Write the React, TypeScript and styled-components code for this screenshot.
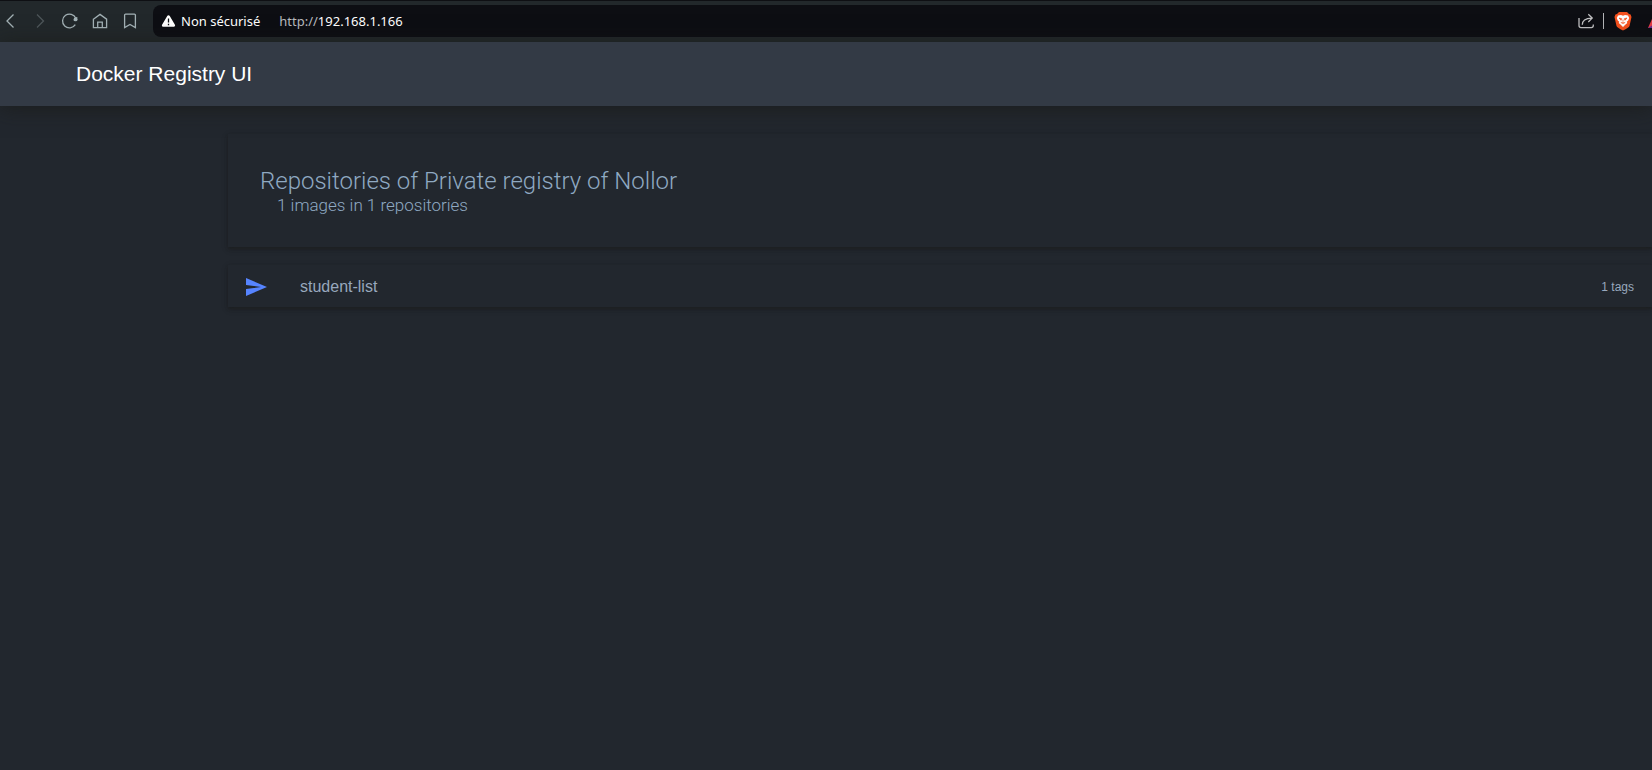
import React from "react";
import styled, { createGlobalStyle } from "styled-components";

const GlobalStyle = createGlobalStyle`
  * { box-sizing: border-box; }
  body {
    margin: 0;
    background: #22272e;
    font-family: "Liberation Sans", Arial, sans-serif;
    overflow-x: hidden;
  }
`;

const BrowserBar = styled.div`
  display: flex;
  align-items: center;
  height: 42px;
  padding-bottom: 1px;
  border-top: 1px solid #0e0f13;
  background: #22282b;
`;

const Tools = styled.nav`
  display: flex;
  flex: none;
  gap: 10px;
  width: 153px;
`;

const IconButton = styled.button<{ $dim?: boolean }>`
  display: flex;
  align-items: center;
  justify-content: center;
  flex: none;
  width: 20px;
  height: 20px;
  padding: 0;
  border: 0;
  background: none;
  color: ${(p) => (p.$dim ? "#4e5659" : "#a3b1b5")};
  cursor: pointer;
`;

const AddressBar = styled.div`
  display: flex;
  align-items: center;
  flex: 1;
  min-width: 0;
  height: 32px;
  padding-left: 8px;
  border-radius: 8px 0 0 8px;
  background: #0d0e13;
  color: #fff;
  font: 13px/18px "Noto Sans", sans-serif;
  overflow: hidden;
`;

const Security = styled.button`
  display: flex;
  align-items: center;
  gap: 5px;
  padding: 0;
  border: 0;
  background: none;
  color: inherit;
  font: inherit;
  white-space: nowrap;
`;

const Url = styled.a`
  flex: 1;
  margin-left: 19px;
  color: #fff;
  text-decoration: none;
  white-space: nowrap;
`;

const Scheme = styled.span`
  color: #b8babe;
`;

const AddressActions = styled.div`
  display: flex;
  align-items: center;
  flex: none;
`;

const ShareButton = styled(IconButton)`
  color: #c0c0c2;
`;

const Divider = styled.span`
  width: 1px;
  height: 16px;
  margin: 0 8px 0 7px;
  background: #b4b5b8;
`;

const BrandIcons = styled.div`
  display: flex;
  gap: 8px;
`;

const Header = styled.header`
  position: relative;
  display: flex;
  align-items: center;
  height: 64px;
  padding: 0 76px;
  background: #333a45;
  box-shadow: 0 2px 20px rgba(24, 25, 20, 0.65);
`;

const AppTitle = styled.h1`
  margin: 0;
  color: #fff;
  font-size: 21px;
  line-height: 24px;
  font-weight: 400;
`;

const Main = styled.main`
  display: flex;
  flex-direction: column;
  gap: 18px;
  padding: 28px 0 28px 228px;
`;

const Card = styled.section`
  background: #22272e;
  box-shadow: 0 2px 3px rgba(24, 25, 22, 0.4), 0 2px 6px rgba(24, 25, 22, 0.25);
`;

const Intro = styled(Card)`
  padding: 33px 32px 32px;
  color: #8fa9c2;
  font-family: Roboto, sans-serif;
  font-weight: 300;
`;

const IntroTitle = styled.h2`
  margin: 0;
  font-size: 24px;
  line-height: 28px;
  font-weight: 300;
`;

const Summary = styled.p`
  margin: 0;
  padding-left: 17px;
  font-size: 17px;
  line-height: 20px;
`;

const Repository = styled.a`
  display: flex;
  align-items: center;
  height: 42px;
  padding: 2px 18px 0 16px;
  color: #98a8bd;
  text-decoration: none;
`;

const RepositoryName = styled.span`
  flex: 1;
  margin-left: 32px;
  font-size: 16px;
  line-height: 20px;
`;

const TagCount = styled.span`
  font-size: 12px;
  line-height: 16px;
`;

const Stroke = ({ d, children }: { d: string; children?: React.ReactNode }) => (
  <svg width="20" height="20" viewBox="0 0 20 20" fill="none" stroke="currentColor" strokeWidth="1.3" aria-hidden="true">
    <path d={d} />
    {children}
  </svg>
);

export default function App() {
  return (
    <>
      <GlobalStyle />
      <BrowserBar>
        <Tools>
          <IconButton aria-label="Back"><Stroke d="M13.5 3.5 7 10l6.500 6.500" /></IconButton>
          <IconButton aria-label="Forward" $dim><Stroke d="M7 3.500 13.500 10 7 16.500" /></IconButton>
          <IconButton aria-label="Reload">
            <Stroke d="M15.300 13.700A6.900 6.900 0 1 1 15.800 7.200">
              <circle cx="15.500" cy="8.400" r="1.900" fill="currentColor" stroke="none" />
              <path d="M14 9.400h3V6z" fill="currentColor" strokeWidth=".6" strokeLinejoin="round" />
            </Stroke>
          </IconButton>
          <IconButton aria-label="Home">
            <Stroke d="M3.400 8.200 10 3.400l6.600 4.800v8.400H3.400zM7.700 16.600v-5.400h4.600v5.400" />
          </IconButton>
          <IconButton aria-label="Bookmark">
            <Stroke d="M5.600 3.100h8.800q1 0 1 1V16.600L10 13.400l-5.400 3.200V4.100q0-1 1-1z" />
          </IconButton>
        </Tools>
        <AddressBar>
          <Security>
            <svg width="15" height="14" viewBox="0 0 15 14" aria-hidden="true">
              <path d="M7.500 2.500 12.800 11.500H2.200z" fill="#fff" stroke="#fff" strokeWidth="2.600" strokeLinejoin="round" />
              <path d="M7.500 4.500v4M7.500 9.700v1.500" stroke="#0d0e13" strokeWidth="1.300" />
            </svg>
            Non sécurisé
          </Security>
          <Url href="#"><Scheme>http://</Scheme>192.168.1.166</Url>
          <AddressActions>
            <ShareButton aria-label="Share">
              <Stroke d="M3 7v7.600q0 2 2 2h10.300q2 0 2-2v-1M6.300 13.800C6.300 9.800 9 7.100 16 7.100M12.300 3.300 16.200 7.100l-3.900 3.900" />
            </ShareButton>
            <Divider />
            <BrandIcons>
              <svg width="24" height="20" viewBox="0 0 24 20" role="img" aria-label="Brave">
                <path d="M7 1h8l2 2 1.600.5.900 2.500-2 9q-.8 1.800-6.500 4.500Q5.300 16.800 4.500 15l-2-9 .9-2.500L5 3z" fill="#f5511e" />
                <path d="M6 4.500 9 4l2 .7L13 4l3 .5L17.200 7l-1 2.500-1.400 1.300.5 1.200-1.800 1.400L11 16l-2.500-2.600L6.700 12l.5-1.200L5.800 9.500 4.800 7z" fill="#fff" />
                <path d="m7 7 2.700.7L9 9.300zM15 7l-2.700.7.700 1.600zM11 8.500v2.200M8.800 11.500l2.200.9 2.200-.9" fill="#f5511e" stroke="#f5511e" strokeWidth=".7" />
              </svg>
              <svg width="8" height="20" viewBox="0 0 8 20" aria-hidden="true">
                <path d="M4 17 8 8v9z" fill="#e63b42" />
                <path d="m4 17 4-2.500V17z" fill="#662d91" />
              </svg>
            </BrandIcons>
          </AddressActions>
        </AddressBar>
      </BrowserBar>
      <Header><AppTitle>Docker Registry UI</AppTitle></Header>
      <Main>
        <Intro>
          <IntroTitle>Repositories of Private registry of Nollor</IntroTitle>
          <Summary>1 images in 1 repositories</Summary>
        </Intro>
        <Card>
          <Repository href="#student-list">
            <svg width="24" height="24" viewBox="0 0 24 24" fill="#5684ff" aria-hidden="true">
              <path d="M2.010 21 23 12 2.010 3 2 10l15 2-15 2z" />
            </svg>
            <RepositoryName>student-list</RepositoryName>
            <TagCount>1 tags</TagCount>
          </Repository>
        </Card>
      </Main>
    </>
  );
}
